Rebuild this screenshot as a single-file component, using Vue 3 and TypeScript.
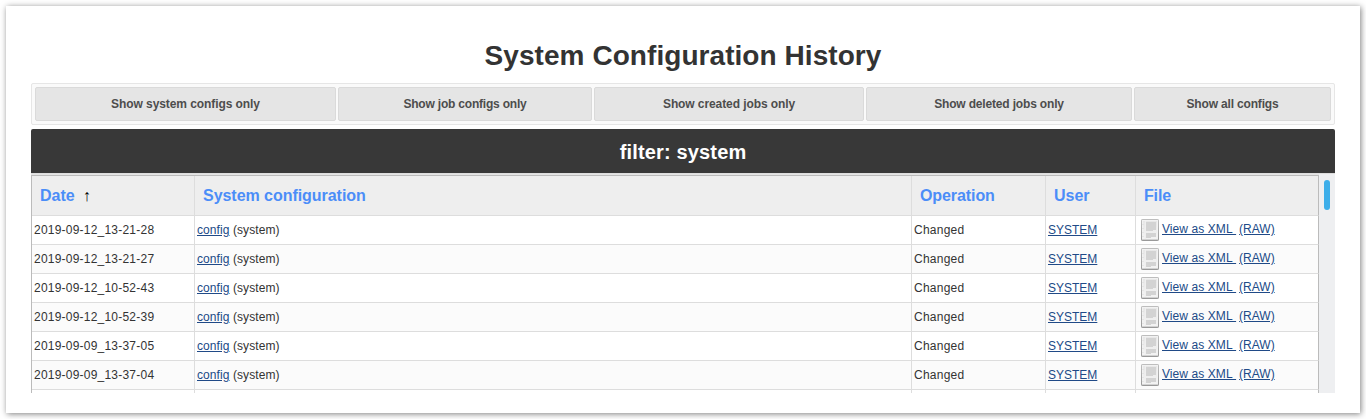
<script setup lang="ts">
interface HistoryEntry {
  date: string
  name: string
  operation: string
  user: string
}

interface Label {
  text: string
  tracking: string
}

const filters: Label[] = [
  { text: 'Show system configs only', tracking: '-0.08px' },
  { text: 'Show job configs only', tracking: '-0.2px' },
  { text: 'Show created jobs only', tracking: '-0.09px' },
  { text: 'Show deleted jobs only', tracking: '-0.17px' },
  { text: 'Show all configs', tracking: '-0.17px' },
]

const columns: Label[] = [
  { text: 'Date', tracking: '0px' },
  { text: 'System configuration', tracking: '-0.04px' },
  { text: 'Operation', tracking: '-0.09px' },
  { text: 'User', tracking: '0px' },
  { text: 'File', tracking: '-0.15px' },
]

const entries: HistoryEntry[] = [
  '2019-09-12_13-21-28',
  '2019-09-12_13-21-27',
  '2019-09-12_10-52-43',
  '2019-09-12_10-52-39',
  '2019-09-09_13-37-05',
  '2019-09-09_13-37-04',
].map((date) => ({ date, name: 'config', operation: 'Changed', user: 'SYSTEM' }))
</script>

<template>
  <main class="panel">
    <h1>System Configuration History</h1>
    <nav class="tabs">
      <button
        v-for="label in filters"
        :key="label.text"
        class="tab"
        type="button"
        :style="{ letterSpacing: label.tracking }"
      >{{ label.text }}</button>
    </nav>
    <div class="banner">filter: system</div>
    <section class="viewport">
      <div class="table">
        <div class="row head">
          <div v-for="(column, i) in columns" :key="column.text" class="cell">
            <a class="sort" :style="{ letterSpacing: column.tracking }">{{ column.text }}</a><span v-if="i === 0" class="arrow">↑</span>
          </div>
        </div>
        <div v-for="entry in entries" :key="entry.date" class="row entry">
          <div class="cell date">{{ entry.date }}</div>
          <div class="cell name"><a class="link">{{ entry.name }}</a>&nbsp;(system)</div>
          <div class="cell operation">{{ entry.operation }}</div>
          <div class="cell"><a class="link">{{ entry.user }}</a></div>
          <div class="cell file">
            <svg class="doc" width="18" height="22" viewBox="0 0 18 22">
              <defs>
                <linearGradient id="page" x1="0" y1="0" x2="0" y2="1">
                  <stop offset="0" stop-color="#e6e6e6" />
                  <stop offset="1" stop-color="#f4f4f4" />
                </linearGradient>
                <linearGradient id="edge" x1="0" y1="0" x2="0" y2="1">
                  <stop offset="0" stop-color="#bdbdbd" />
                  <stop offset="1" stop-color="#999" />
                </linearGradient>
              </defs>
              <rect x="0.5" y="0.5" width="17" height="21" rx="0.6" fill="url(#page)" stroke="url(#edge)" />
              <path d="M1 20.5h16" stroke="#d2d2d2" />
              <path d="M1.5 1v19M16.5 1v19M1 1.5h16" stroke="#f2f2f2" fill="none" />
              <path d="M4.5 2v18" stroke="#efefef" />
              <path d="M1.5 5.5h1M1.5 9.5h1M1.5 13.5h1M1.5 17.5h1" stroke="#dadada" />
              <path d="M5 3h10v8h-3v1H5zM5 14h10v4h-5v1H5z" fill="#d3d3d3" />
            </svg>
            <a class="link xml">View as XML&nbsp;</a>
            <a class="link">(RAW)</a>
          </div>
        </div>
        <div class="row entry">
          <div v-for="column in columns" :key="column.text" class="cell"></div>
        </div>
      </div>
      <div class="track"><div class="thumb"></div></div>
    </section>
  </main>
</template>

<style>
html,
body {
  background: #fff;
  overflow: hidden;
}
</style>

<style scoped>
.panel {
  box-sizing: border-box;
  height: 407px;
  margin: 6px;
  padding: 0 25px;
  background: #fff;
  box-shadow: 1px 1px 6px rgba(0, 0, 0, 0.5);
  font-family: "Liberation Sans", Arial, sans-serif;
  font-size: 12px;
  color: #333;
  overflow: hidden;
}
h1 {
  margin: 0;
  padding-top: 33px;
  height: 44px;
  line-height: 34px;
  font-size: 28px;
  font-weight: bold;
  letter-spacing: 0.06px;
  text-align: center;
}
.tabs {
  box-sizing: border-box;
  display: grid;
  grid-template-columns: 301px 254px 270px 266px 197px;
  gap: 2px;
  height: 42px;
  padding: 3px;
  border: 1px solid #e6e6e6;
  border-radius: 2px;
  background: #fafafa;
}
.tab {
  padding: 0;
  border: 1px solid #dadada;
  border-radius: 2px;
  background: #e5e5e5;
  font: bold 12px "Liberation Sans", Arial, sans-serif;
  color: #4d4d4d;
}
.banner {
  height: 44px;
  margin-top: 4px;
  border-radius: 2px 2px 0 0;
  background: #383838;
  color: #fff;
  font-size: 20px;
  font-weight: bold;
  letter-spacing: 0.16px;
  line-height: 46px;
  text-align: center;
}
.viewport {
  box-sizing: border-box;
  display: flex;
  height: 220px;
  border-top: 1px solid #ddd;
  overflow: hidden;
}
.table {
  width: 1288px;
  flex: none;
  padding-top: 1px;
  background: #e4e4e4;
}
.row {
  display: grid;
  grid-template-columns: 163px 717px 134px 90px 183px;
  border-left: 1px solid #bbb;
}
.cell {
  box-sizing: border-box;
  border-right: 1px solid #ddd;
  border-bottom: 1px solid #ddd;
  white-space: nowrap;
}
.cell:last-child {
  border-right-color: #bbb;
}
.head {
  border-top: 1px solid #bbb;
  background: #eee;
}
.head .cell {
  height: 40px;
  padding-left: 8px;
  line-height: 39px;
}
.sort {
  color: #4b8df8;
  font-size: 16px;
  font-weight: bold;
}
.arrow {
  margin-left: 8px;
  color: #000;
  font-size: 16px;
}
.entry {
  background: #fff;
}
.entry:nth-child(odd) {
  background: #fbfbfb;
}
.entry .cell {
  height: 29px;
  padding-left: 2px;
  line-height: 28px;
}
.date {
  letter-spacing: 0.22px;
}
.name {
  letter-spacing: 0.08px;
}
.operation {
  letter-spacing: 0.25px;
}
.link {
  color: #204a87;
  text-decoration: underline;
}
.entry .file {
  display: flex;
  padding-left: 5px;
  line-height: 26px;
}
.doc {
  flex: none;
  margin: 3px 3px 0 0;
}
.xml {
  margin-right: 3px;
  letter-spacing: 0.08px;
}
.track {
  width: 16px;
  flex: none;
  background: #eeeff1;
}
.thumb {
  width: 6px;
  height: 30px;
  margin: 6px 0 0 5px;
  border-radius: 3px;
  background: #3daee9;
}
</style>
